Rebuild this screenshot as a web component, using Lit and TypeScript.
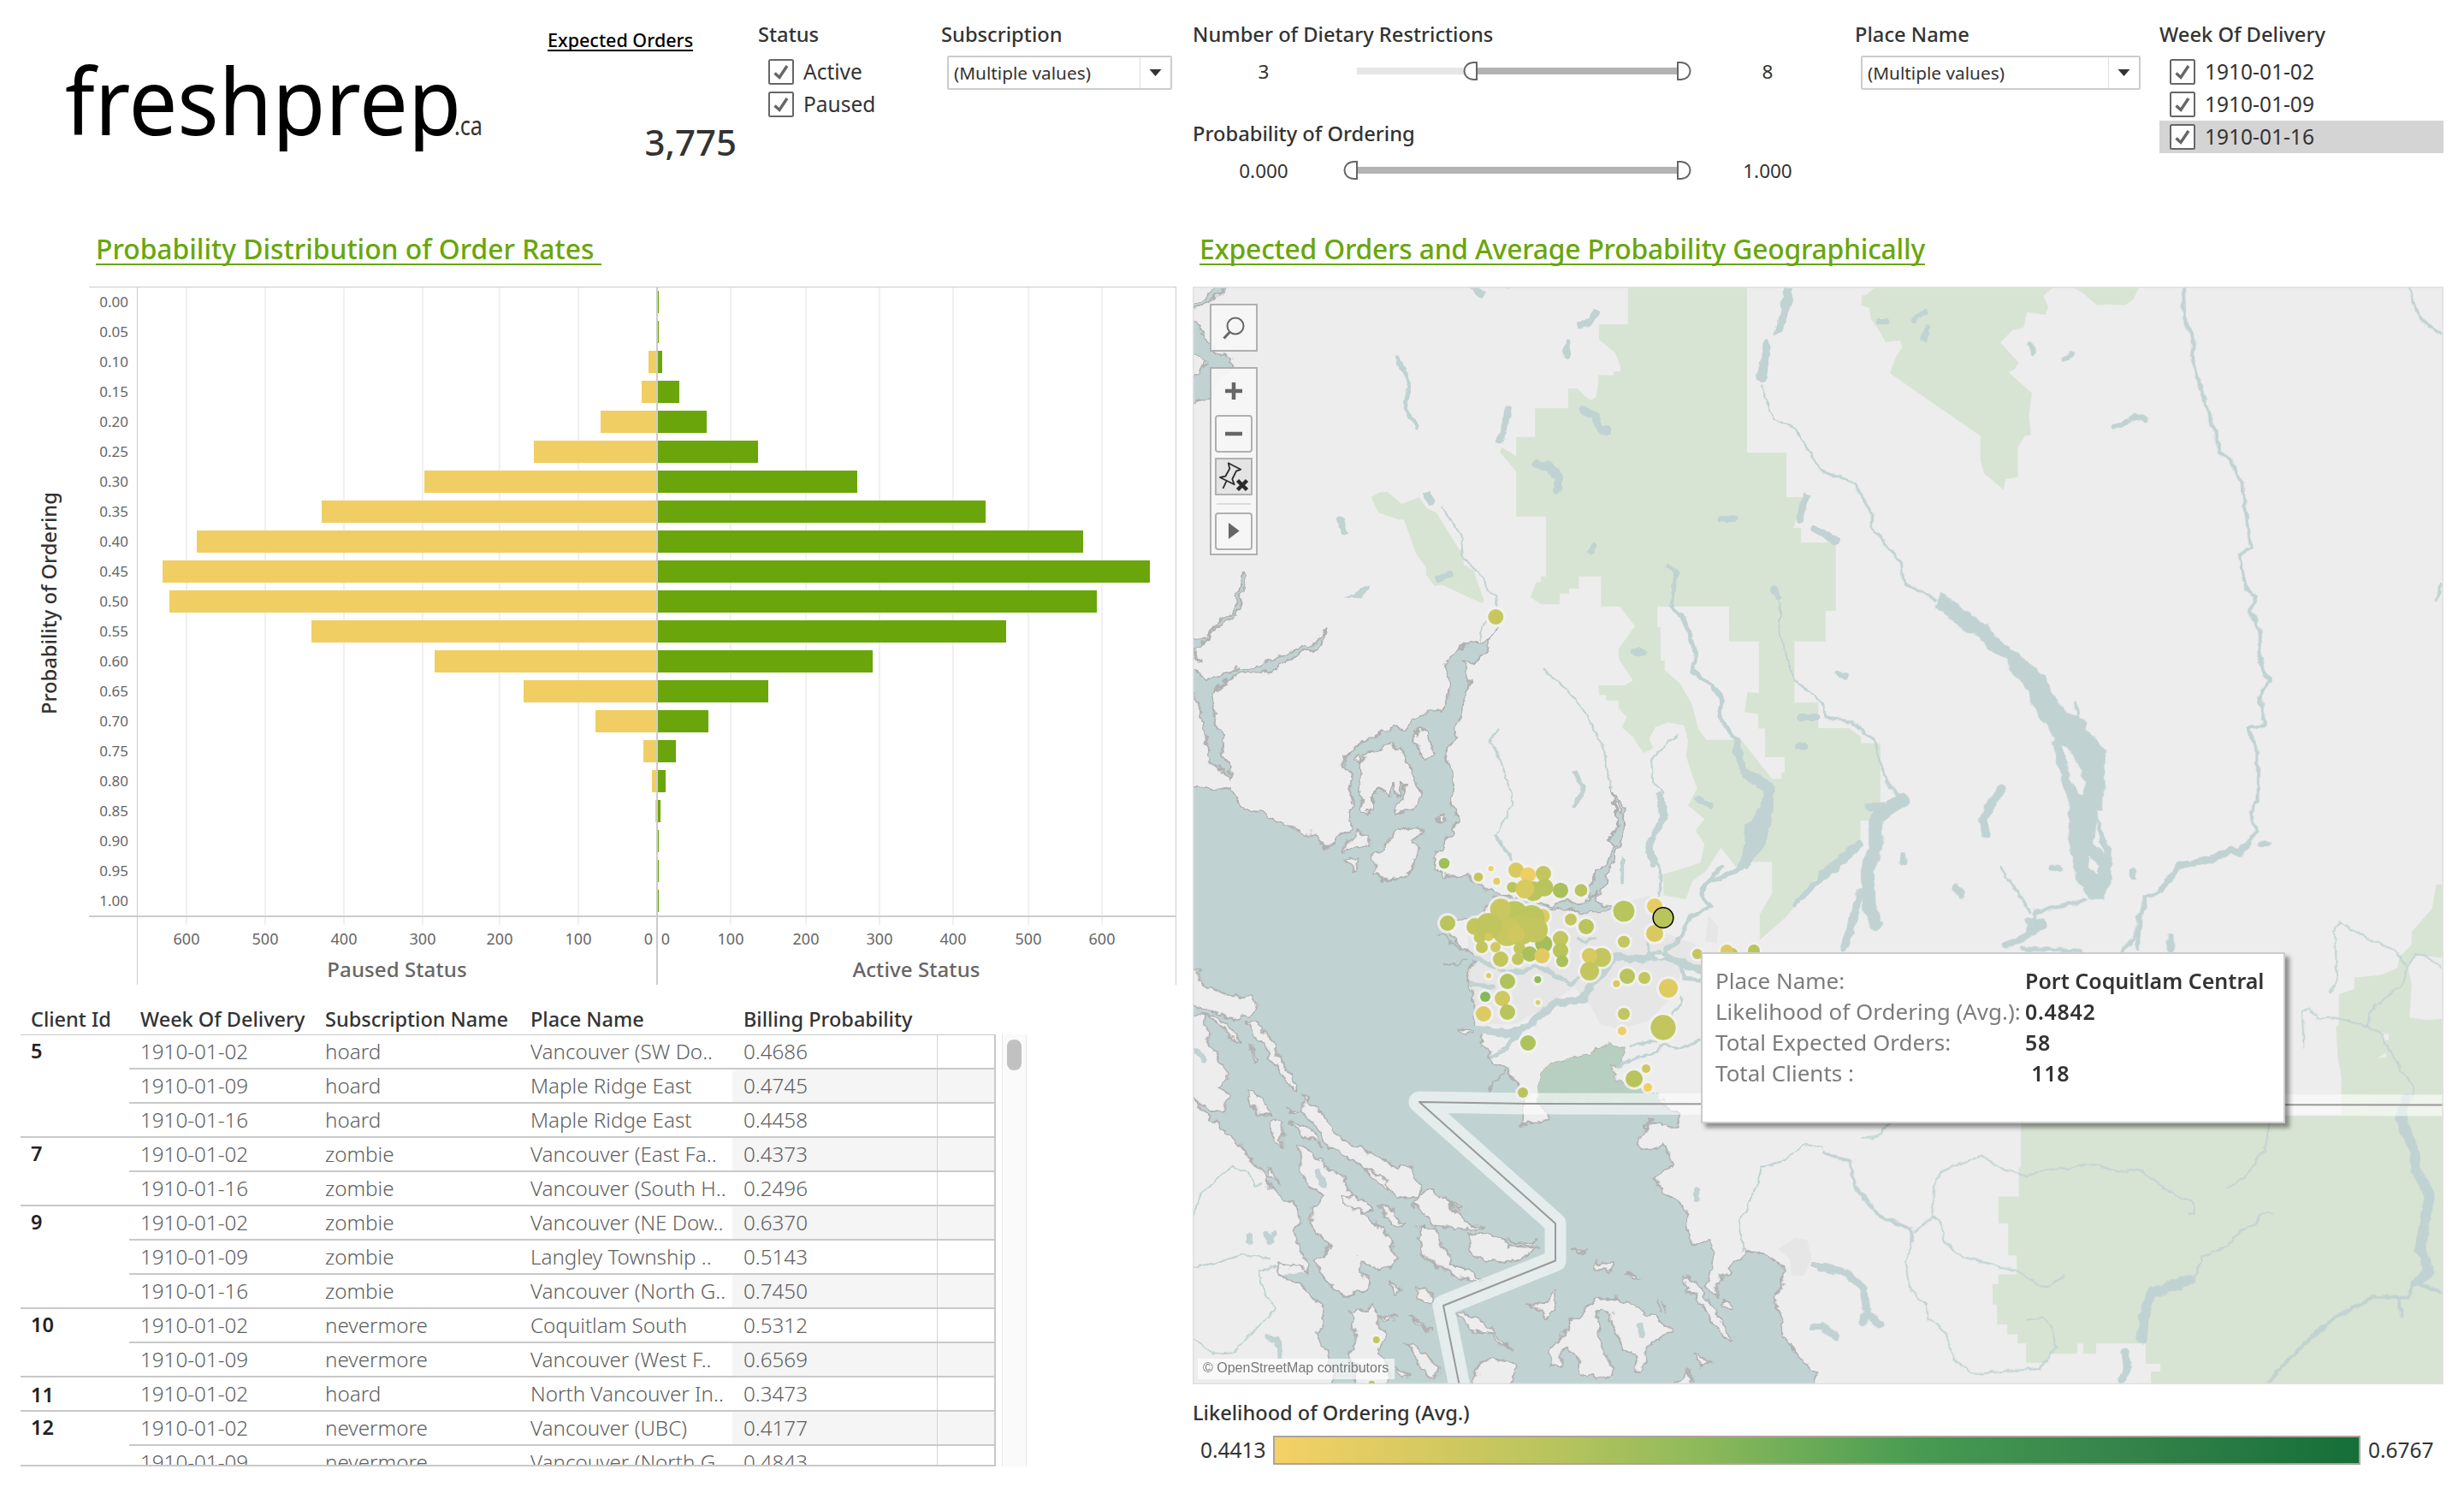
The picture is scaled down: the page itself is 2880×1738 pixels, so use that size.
import { LitElement, html, svg, css } from "lit";
import { customElement } from "lit/decorators.js";

/* ---------- chart data: bin label, paused bar start, active bar end ---------- */
const CENTER = 768;
const BINS: [string, number, number][] = [
  ["0.00", 768, 770], ["0.05", 768, 770], ["0.10", 758, 774], ["0.15", 750, 794],
  ["0.20", 702, 826], ["0.25", 624, 886], ["0.30", 496, 1002], ["0.35", 376, 1152],
  ["0.40", 230, 1266], ["0.45", 190, 1344], ["0.50", 198, 1282], ["0.55", 364, 1176],
  ["0.60", 508, 1020], ["0.65", 612, 898], ["0.70", 696, 828], ["0.75", 752, 790],
  ["0.80", 762, 778], ["0.85", 766, 772], ["0.90", 768, 770], ["0.95", 768, 770],
  ["1.00", 768, 770],
];
const PAUSED_TICKS: [number, string][] = [[218, "600"], [310, "500"], [402, "400"], [494, "300"], [584, "200"], [676, "100"]];
const ACTIVE_TICKS: [number, string][] = [[854, "100"], [942, "200"], [1028, "300"], [1114, "400"], [1202, "500"], [1288, "600"]];

/* ---------- table data ---------- */
type Row = [string, string, string, string];
const CLIENTS: { id: string; rows: Row[] }[] = [
  { id: "5", rows: [
    ["1910-01-02", "hoard", "Vancouver (SW Do..", "0.4686"],
    ["1910-01-09", "hoard", "Maple Ridge East", "0.4745"],
    ["1910-01-16", "hoard", "Maple Ridge East", "0.4458"]] },
  { id: "7", rows: [
    ["1910-01-02", "zombie", "Vancouver (East Fa..", "0.4373"],
    ["1910-01-16", "zombie", "Vancouver (South H..", "0.2496"]] },
  { id: "9", rows: [
    ["1910-01-02", "zombie", "Vancouver (NE Dow..", "0.6370"],
    ["1910-01-09", "zombie", "Langley Township ..", "0.5143"],
    ["1910-01-16", "zombie", "Vancouver (North G..", "0.7450"]] },
  { id: "10", rows: [
    ["1910-01-02", "nevermore", "Coquitlam South", "0.5312"],
    ["1910-01-09", "nevermore", "Vancouver (West F..", "0.6569"]] },
  { id: "11", rows: [["1910-01-02", "hoard", "North Vancouver In..", "0.3473"]] },
  { id: "12", rows: [
    ["1910-01-02", "nevermore", "Vancouver (UBC)", "0.4177"],
    ["1910-01-09", "nevermore", "Vancouver (North G..", "0.4843"]] },
];

/* ---------- map marks: x, y, radius (thirds of a pixel from 1660,990), colour ---------- */
const A = "#b9c45c", B = "#c3c65e", Y = "#dccb61", O = "#efce64", G = "#a9c05b";
const MARKS: [number, number, number, string][] = [
  [84, 57, 19, "#9cc05c"], [248, 76, 9, O], [204, 105, 16, B], [268, 120, 12, "#e6cc62"],
  [336, 81, 27, "#d8ca60"], [378, 98, 27, O], [432, 93, 27, B], [323, 141, 19, A],
  [397, 155, 34, A], [436, 142, 31, A], [367, 147, 33, "#d6ca60"], [492, 152, 27, G],
  [564, 152, 22, A], [96, 267, 27, A], [428, 243, 26, Y], [433, 340, 30, "#a3be5a"],
  [209, 317, 21, B], [348, 356, 21, B], [384, 375, 27, G], [427, 381, 27, "#dfcb61"],
  [192, 279, 30, B], [330, 240, 50, "#bdc55d"], [390, 250, 46, "#bdc55d"], [350, 290, 54, B],
  [402, 290, 45, B], [305, 297, 50, "#c9c75f"], [335, 305, 30, "#d0c85f"], [282, 218, 37, "#c9c760"],
  [240, 278, 46, "#c0c55e"], [240, 315, 15, "#d3c95f"], [216, 351, 21, B],
  [264, 351, 18, "#d3c95f"], [282, 393, 27, B], [342, 393, 21, B], [492, 321, 27, B],
  [492, 363, 27, A], [498, 400, 21, G], [528, 254, 21, B], [582, 279, 27, A],
  [714, 225, 37, A], [714, 332, 21, B], [822, 207, 27, "#e6cc62"], [822, 303, 30, "#d9c95f"],
  [636, 387, 33, B], [594, 381, 27, "#d6ca60"], [594, 435, 33, B], [726, 453, 27, A],
  [786, 459, 21, B], [688, 479, 12, "#d8ca60"], [870, 495, 33, "#e0cb62"], [240, 451, 9, Y],
  [306, 471, 27, "#b0c25b"], [412, 465, 12, "#8cbb5a"], [228, 525, 18, "#84b85a"],
  [288, 531, 27, "#cfc85f"], [306, 579, 27, A], [413, 545, 8, Y], [222, 585, 27, Y],
  [714, 585, 21, B], [708, 645, 15, O], [852, 633, 44, B], [378, 687, 27, "#aec25b"],
  [792, 777, 15, "#d0c85f"], [750, 813, 30, A], [798, 843, 15, O], [360, 861, 18, A],
  [972, 375, 18, B], [1095, 372, 18, B], [1075, 364, 22, Y], [1170, 363, 21, A],
  [265, -807, 27, "#c8c75e"], [-154, 1728, 12, B], [-170, 1884, 12, G],
];

/* Map sheets: local tracing units to page pixels. */
const NW = "translate(1380 330) scale(.47832 .44643)";
const NE = "translate(2130 330) scale(.47832 .44643)";
const SW = "translate(1380 960) scale(.47832 .49618)";
const SE = "translate(2130 960) scale(.47832 .49618)";
const MID = "translate(1660 990) scale(.33333)";

const sea = (shore: string, close = "") => svg`
  <path class="w" d=${shore + close}></path><path class="c" d=${shore}></path>`;
const lands = (...ds: string[]) => ds.map((d) => svg`<path class="i" d=${d}></path>`);
const rivers = (width: number, ...ds: string[]) =>
  ds.map((d) => svg`<path class="r" stroke-width=${width} d=${d}></path>`);

@customElement("map-view")
export class MapView extends LitElement {
  static styles = css`
    :host { display: block; position: relative; width: 1462px; height: 1283px; font-family: "Noto Sans", "Open Sans", sans-serif; }
    .map { display: block; width: 1462px; height: 1283px; }
    .w { fill: #c1d2d2; }
    .c { fill: none; stroke: #b0b0b0; stroke-width: 2; vector-effect: non-scaling-stroke; stroke-linejoin: round; }
    .i { fill: #ededed; stroke: #b0b0b0; stroke-width: 2; vector-effect: non-scaling-stroke; stroke-linejoin: round; }
    .l { fill: #ededed; }
    .p { fill: #d8e4d3; }
    .u { fill: #e6e6e6; }
    .r { fill: none; stroke: #c1d2d2; vector-effect: non-scaling-stroke; stroke-linejoin: round; stroke-linecap: round; }
    .halo { fill: #f1f1ee; fill-opacity: .85; }
    .search, .tools { position: absolute; left: 20px; box-sizing: border-box; width: 56px; border: 2px solid #b0b0b0; background: rgba(246, 246, 246, .93); }
    .search { top: 20px; height: 56px; }
    .search svg { display: block; }
    .tools { top: 94px; height: 220px; display: flex; flex-direction: column; align-items: center; padding-top: 4px; }
    .btn { box-sizing: border-box; width: 44px; height: 44px; border: 2px solid #b0b0b0; border-radius: 4px; margin-bottom: 6px; flex: none; }
    .btn svg { display: block; width: 40px; height: 40px; }
    .bare { border-color: transparent; }
    .on { background: #e4e4e4; border-radius: 0; }
    .sep { width: 40px; height: 2px; background: #dcdcdc; margin: 3px 0 9px; flex: none; }
    .credit { position: absolute; left: 6px; bottom: 6px; height: 24px; padding: 0 7px 0 6px; background: rgba(255, 255, 255, .65); font: 16px/21px "Liberation Sans", Arial, sans-serif; color: #777; white-space: nowrap; }
    .tip { position: absolute; left: 594px; top: 778px; box-sizing: border-box; width: 683px; height: 200px; border: 2px solid #ccc; background: #fff; box-shadow: 5px 5px 5px rgba(0, 0, 0, .4); padding: 13px 0 0 15px; display: grid; grid-template-columns: 362px 1fr; grid-auto-rows: 36px; align-content: start; font-size: 26px; font-weight: 370; line-height: 36px; color: #7c7c7c; white-space: pre; }
    .tip b { font-weight: 600; color: #333; font-size: 25px; }
    .tip .num { letter-spacing: .7px; }
  `;

  render() {
    return html`
      <svg class="map" viewBox="1394 335 1462 1283">
        <defs>
          <filter id="jag" x="1390" y="330" width="1470" height="1290" filterUnits="userSpaceOnUse" color-interpolation-filters="sRGB">
            <feTurbulence type="fractalNoise" baseFrequency=".07" numOctaves="3" seed="4" result="n"></feTurbulence>
            <feDisplacementMap in="SourceGraphic" in2="n" scale="14" xChannelSelector="R" yChannelSelector="G"></feDisplacementMap>
          </filter>
          <filter id="soft" x="1390" y="330" width="1470" height="1290" filterUnits="userSpaceOnUse" color-interpolation-filters="sRGB">
            <feTurbulence type="fractalNoise" baseFrequency=".09" numOctaves="2" seed="9" result="n"></feTurbulence>
            <feDisplacementMap in="SourceGraphic" in2="n" scale="7" xChannelSelector="R" yChannelSelector="G"></feDisplacementMap>
          </filter>
        </defs>
        <rect x="1394" y="335" width="1462" height="1283" fill="#ededed"></rect>

        <g transform=${NW}>
          <path class="p" d="M1093,12V110H1022V150L1040,165 1062,185 1075,220V233H1058V243H1020V270L1015,300 1002,308 985,295 970,278H947V330H866V405H820V455L785,432 780,445 820,495V613H893V770H880V785H868L855,825 880,843H926V815H949V802H973V770H1027V849H1073L1110,900 1070,960V985L1105,1042 1085,1055H1022V1080H1040V1095H1070V1115L1090,1138 1078,1165 1105,1190 1130,1232 1155,1220 1145,1195 1160,1165 1190,1152 1230,1160 1240,1200 1235,1240 1250,1290 1262,1325 1240,1370 1280,1405 1258,1435 1280,1470 1270,1520 1180,1550V1605L1235,1615 1250,1568 1285,1540 1320,1480 1360,1535 1385,1517H1445V1600L1415,1655V1722L1480,1661 1568,1544 1598,1525 1661,1465V1409H1710V1207H1663V1190L1633,1167H1558V1100H1500V940H1576V860H1601V681H1516V643H1497L1525,562H1480V446H1384V12Z"></path>
          <path class="l" d="M1165,849H1340V940H1413V1075L1385,1073 1378,1125 1411,1130V1168H1428V1243H1476V1283H1468V1300H1445L1370,1198H1285L1265,1170 1250,1105 1220,1050 1183,1015V990H1173V903H1165Z"></path>
          <path class="p" d="M466,562 485,550 505,548 540,580 583,562 600,590 625,603 690,715 692,740 715,752 742,835 735,840 640,793 620,795 600,765 600,748 575,710 545,620 535,622 483,603Z"></path>
          <path class="p" d="M792,12H812L800,19Z"></path>
        </g>
        <g transform=${NE}>
          <path class="p" d="M130,12H567L540,35 552,65 545,85 500,78 492,118 465,125 435,158 480,210 470,228 455,235 512,290 505,350 510,400 495,402 478,432V510L448,515 443,543 395,500 386,465V402L165,238 180,195 195,170 190,152 155,157 138,125 118,95 115,68 95,60 97,35 110,30Z"></path>
          <path class="p" d="M610,12H775L760,45 740,60 700,58 670,60 640,30Z"></path>
        </g>
        <g transform=${SE}>
          <path class="p" d="M1520,150L1500,148 1490,205 1440,260 1440,290 1410,320 1405,345 1365,362 1300,368V395L1262,407V478L1255,485 1260,560 1268,600 1268,700H1520Z"></path>
          <path class="l" d="M1520,322L1450,315 1430,340 1440,385 1435,462 1480,468 1520,465Z"></path>
          <path class="l" d="M1367,501H1384V515H1367ZM1357,558L1378,545 1378,555Z"></path>
          <path class="p" d="M485,700V815H480V884H430V947H454V1023H475V1067H430V1090H416V1138H427V1185H452V1208H477V1230H498V1275H552V1254H623V1230H638V1254H669V1230H790V1278H826V1296H803V1330H1520V690H485Z"></path>
        </g>
        <g transform=${MID}>
          <path class="u" d="M165,250L250,170 480,210 640,220 800,170 850,180 860,300 960,340 985,370 985,420 915,440 890,520 800,610 700,640 630,620 600,560 540,490 440,560 330,620 200,620 180,560 170,400Z"></path>
          <path class="u" d="M1010,240L1045,280 1040,340 1000,330Z"></path>
        </g>
        <path class="u" d="M2078,1460l20,-13 14,2 6,22 -10,20 -14,0 -2,-20z"></path>

        <g filter="url(#jag)">
          <g transform=${NW}>
            ${sea("M20,1322L60,1328 100,1330 128,1324 135,1350 150,1380 190,1384 235,1413 270,1425 300,1443 322,1445 350,1476 380,1468 415,1425 412,1395 422,1365 410,1318 418,1295 398,1268 400,1238 430,1215 470,1190 515,1162 550,1172 575,1138 600,1124 640,1122 658,1075 660,1045 648,1010 650,985 700,950 740,940 755,935 775,908 760,930 750,960 730,988 692,994 690,1005 705,1045 690,1090 685,1125 670,1190 648,1235 650,1260 662,1285 665,1360 675,1410 660,1450 640,1485 615,1497 625,1530 640,1545 643,1560", "L643,1570H20Z")}
            ${sea("M20,1000L62,1038 100,1028 150,1010 200,1000 240,978 300,960 325,940 350,920 360,898 345,950 310,968 270,985 215,1025 150,1020 110,1045 78,1085 85,1150 105,1180 105,1210 98,1240 125,1270 115,1303 100,1275 70,1250 68,1220 50,1130 45,1100 20,1060", "Z")}
            ${sea("M20,940L60,935 85,895 130,860 145,800 148,762 157,765 155,800 140,860 105,895 85,905 65,935 38,960 45,995 20,960", "Z")}
            ${sea("M20,58L55,45 75,22 95,5 108,5 100,30 70,50 20,70", "Z")}
            ${sea("M20,95L55,130 70,165 90,185 125,200 128,222 95,245 70,300 20,318", "Z")}
            ${lands("M20,190L50,195 65,212 45,235 20,260",
              "M445,1275 438,1260 460,1228 490,1222 515,1210 540,1222 550,1245 568,1280 575,1310 588,1335 583,1363 555,1380 535,1392 528,1375 540,1350 552,1315 542,1315 535,1345 523,1345 520,1310 508,1345 495,1325 475,1345 455,1392 445,1385 448,1355 438,1340Z",
              "M580,1172 600,1180 612,1205 615,1240 600,1248 582,1230 575,1200Z",
              "M630,1395 640,1392 645,1410 635,1412Z", "M422,1245 440,1238 438,1258Z")}
            ${sea("M1050,1325L1065,1355 1082,1375 1080,1440 1065,1480 1060,1510 1045,1540 1040,1575 1000,1630 1000,1568 1040,1520 1058,1480 1048,1460 1062,1430 1062,1370Z")}
            ${lands("M1062,1365 1070,1365 1074,1392 1066,1388Z")}
          </g>
          <g transform=${SW}>
            ${sea("M643,133L650,128 705,128 730,150 760,162 800,180 860,185 905,205 935,188 960,195 1000,185 1015,160 1012,190 1055,203 1050,212 1010,212 960,207 900,212 850,205 800,188 765,178 750,195 735,220 715,235 690,228 655,232 640,250 665,275 695,300 725,330 705,345 700,370 712,400 715,450 720,480 735,510 735,530 760,545 760,565 800,590 825,615 822,635 835,650 835,712 900,705 885,665 870,625 885,590 905,570 960,560 1010,540 1050,525 1082,535 1080,570 1050,575 1065,615 1110,632 1150,640 1190,670 1215,690 1218,725 1190,725 1165,705 1150,705 1120,745 1125,765 1150,775 1180,760 1200,780 1198,815 1155,838 1190,880 1230,905 1240,960 1242,1000 1290,985 1305,1010 1300,1050 1280,1095 1305,1115 1325,1070 1360,1040 1375,1010 1440,1025 1480,1060 1470,1090 1450,1120 1470,1175 1465,1200 1500,1250 1550,1300 1540,1340",
              "L375,1340 365,1270 332,1210 350,1190 350,1150 320,1110 270,1080 235,1065 310,1065 290,1000 275,965 298,945 290,910 245,890 200,830 150,770 100,720 60,690 20,640V135H643Z")}
            <path class="c" d="M375,1340L365,1270 332,1210 350,1190 350,1150 320,1110 270,1080 235,1065 240,1045 280,1050 310,1065 305,1035 290,1000 275,965 298,945 290,910 245,890 200,830 150,770 100,720 60,690 20,640"></path>
            ${lands(
              "M20,355L45,350 45,375 75,395 110,410 180,415 185,435 170,460 130,465 90,450 20,430",
              "M20,455L60,460 65,510 90,560 120,605 90,625 110,650 105,685 70,680 20,645",
              "M50,455 95,460 130,500 150,520 120,510 90,470Z",
              "M165,475 190,475 225,520 245,560 285,620 285,645 250,600 225,570 215,540 185,520Z",
              "M300,648 330,670 350,700 380,740 440,770 490,795 560,820 590,855 585,885 530,885 500,850 440,810 370,770 330,720 300,690Z",
              "M165,640 200,645 210,670 220,690 195,695 170,665Z", "M225,700 245,705 250,770 225,740 215,715Z",
              "M288,760 330,785 360,820 390,825 410,870 440,920 490,955 530,1025 520,1050 480,1055 435,1030 440,1055 465,1085 450,1105 400,1120 360,1085 325,1040 370,1000 340,975 315,950 315,910 355,885 315,860 295,830 290,790Z",
              "M580,910 560,900 610,870 640,885 665,915 690,940 740,955 700,960 640,960 600,935Z",
              "M580,955 620,955 635,1000 660,1020 655,1050 690,1050 735,1080 710,1085 640,1055 590,1020Z",
              "M705,970 750,970 800,1000 880,1005 830,1030 800,1040 740,1035 710,1010Z",
              "M575,1100 595,1095 615,1120 605,1135 580,1125Z",
              "M410,1155 470,1145 485,1185 500,1200 485,1250 505,1290 500,1340 415,1340 440,1290 410,1260 430,1215 420,1180Z",
              "M900,1250 930,1210 960,1175 1010,1125 1060,1120 1110,1140 1200,1200 1170,1220 1135,1240 1125,1300 1110,1295 1115,1260 1080,1240 1055,1190 1050,1155 1030,1150 1015,1160 1025,1215 1040,1260 1060,1290 1055,1310 980,1305 975,1270 950,1240 925,1260 930,1290 905,1280Z",
              "M850,1140 890,1130 915,1105 920,1150 895,1175 880,1150Z",
              "M1230,1070 1265,1095 1290,1130 1320,1170 1350,1225 1330,1220 1290,1170 1265,1120 1235,1110Z",
              "M675,1160 720,1165 760,1190 770,1210 710,1200Z", "M550,1230 580,1240 635,1290 620,1315 590,1290Z",
              "M715,1340 720,1290 760,1265 815,1275 820,1300 790,1340Z", "M1255,1255 1280,1260 1295,1275 1270,1285Z",
              "M1195,1340 1235,1290 1260,1340Z", "M960,1005 990,1010 975,1015Z", "M1015,1032 1035,1042 1055,1045 1050,1065 1018,1052Z",
              "M1090,1065 1125,1072 1100,1074Z", "M385,880 430,885 470,915 450,920 400,900Z",
              "M490,905 520,915 545,950 520,955 495,930Z", "M510,1085 540,1100 525,1115Z",
              "M595,15 585,25 570,50 580,70 575,95 560,120 540,135 500,138 465,130 475,105 470,85 490,65 515,35 530,22 560,15Z",
              "M395,75 405,50 425,30 430,22 460,38 460,55 435,60Z", "M400,90 435,85 430,115Z",
              "M265,705 310,725 350,770 300,740Z", "M260,670 290,690 280,692Z", "M165,530 185,555 180,565Z",
              "M210,810 240,850 215,840Z", "M440,810 500,840 510,870 470,840Z", "M640,890 690,915 680,918Z",
              "M790,985 870,992 860,1000Z", "M750,1200 810,1245 770,1225Z", "M680,490 715,485 700,505Z",
              "M560,1160 610,1200 580,1185Z", "M480,1165 530,1168 500,1175Z", "M1320,1125 1345,1130 1348,1148 1325,1142Z",
              "M525,1280 560,1305 540,1312Z")}
            <path class="c" d="M628,262L690,302M642,344L705,325M790,590L750,635M1168,1130L1170,1155M1180,1130L1186,1158"></path>
            <path d="M872,660L870,625 885,590 905,570 960,560 1010,540 1050,525 1082,535 1080,570 1050,575 1065,615 1110,632 1150,640 1185,662Z" fill="#b7cfc1"></path>
          </g>
        </g>

        <g filter="url(#soft)">
          <g transform=${NW}>
            ${rivers(2, "M1448,360L1500,380 1545,460 1568,495M1420,270L1448,360", "M1462,830L1465,930 1500,1040 1568,1100", "M885,1015L930,1050 985,1120 1030,1210 1052,1325", "M775,1172L755,1195 780,1245 812,1360 770,1450", "M1212,1185L1150,1250 1155,1310 1182,1340", "M640,590L665,630 685,665 690,720 745,780 750,810 772,820 772,845", "M742,885L732,915 735,940")}
            ${rivers(5, "M1192,740L1210,760 1200,850 1230,880 1258,970 1250,1020 1300,1055 1325,1090 1315,1135 1355,1195", "M528,195L560,260 548,330 578,378", "M770,1450L810,1510", "M962,1282L985,1320 960,1375", "M1078,1510V1568")}
            ${rivers(8, "M1172,1345L1180,1400 1145,1470 1155,1525", "M800,330L795,370 780,415", "M1452,805L1462,825", "M1528,562L1512,620", "M1548,645L1600,675", "M388,618L402,655", "M948,158L942,190", "M1320,619H1352", "M1108,968H1132", "M1268,1355L1295,1370", "M1515,1138H1550", "M1508,1215H1525", "M630,775L655,765", "M602,558L612,575", "M975,110L1000,105 1015,80", "M715,10L735,30", "M1008,690L1002,705")}
            ${rivers(11, "M985,335L1012,350 1025,380 1042,388", "M870,475L905,490 925,510 922,540", "M1432,165L1420,250")}
            <path class="w" d="M865,468L900,465 935,500 930,520 905,510 895,495 865,490ZM1475,12H1497L1495,45 1470,130 1450,140 1465,80ZM396,825L425,818 440,800 462,792 460,808 442,827ZM1350,1190L1350,1230 1360,1265 1385,1305 1425,1335 1410,1385 1380,1420 1378,1470 1360,1530 1290,1568 1300,1572 1385,1535 1430,1465 1450,1385 1452,1320 1415,1285 1385,1275 1370,1225 1370,1192Z"></path>
          </g>
          <g transform=${NE}>
            ${rivers(3, "M0,495L60,518 80,525 120,605 120,640 190,730 200,788 275,830", "M0,1100L8,1140 70,1150 130,1200 138,1250 165,1320 195,1350", "M435,1533L480,1600 508,1648", "M1430,12L1460,95 1512,133", "M1512,790L1502,835")}
            ${rivers(4, "M882,12L885,100 908,155 903,190 920,260 960,390 970,445 995,460 1025,525 1035,600 1047,695 1018,715 1035,800 1058,825 1045,860 1072,915 1065,960 1078,1020 1093,1040 1068,1085 1083,1158 1038,1165 1065,1230 1063,1360 1045,1390 1063,1438 1025,1475 1020,1500 1000,1480 950,1505 870,1525 840,1568")}
            ${rivers(7, "M140,102H155", "M225,98L252,78", "M257,118L248,148", "M510,165L515,185", "M590,202L607,188", "M715,378L743,365", "M755,358L768,352 790,360", "M38,1022L55,1033", "M198,1500V1520", "M560,1533H578", "M755,1538L762,1560", "M1072,1470H1088", "M1020,1495L1035,1475")}
            ${rivers(3, "M620,1100L625,1140")}
            ${rivers(10, "M438,1325L405,1380 393,1410 400,1445", "M90,1470L50,1510 0,1555")}
            ${rivers(16, "M195,1355L150,1385 130,1405 130,1480 110,1540 115,1640 130,1680")}
            <path class="w" d="M102,1368L150,1360 140,1385 115,1385Z"></path>
            <path class="w" d="M290,813L345,855 385,885 405,895 425,930 480,975 545,1030 560,1075 605,1130 640,1145 645,1170 692,1225 690,1300 685,1380 672,1385 675,1410 700,1470 710,1510 705,1575 685,1615 650,1615 620,1560 600,1450 605,1360 585,1310 570,1230 558,1205 568,1200 515,1110 500,1065 455,1015 450,985 405,960 385,930 340,905 275,850Z"></path>
            <path class="l" d="M585,1210L600,1215 635,1280 640,1340 625,1338 605,1300ZM670,1410L685,1495 665,1470ZM650,1500L675,1525 675,1552 648,1535Z"></path>
          </g>
          <g transform=${MID}>
            ${rivers(9, "M1100,480L985,430 900,400 840,378 780,392 680,385 650,430 600,480 570,535 480,545 430,580 380,625 320,655 240,645 200,640")}
            ${rivers(5, "M160,380L220,400 280,430 340,440 400,420 450,430 500,470 530,480 560,450 640,430", "M180,480L250,490", "M860,370L915,420 925,460 985,465", "M860,365L920,310 950,240 1020,210 985,170 1000,130 1060,70", "M380,625L320,680 290,710 250,740")}
            ${rivers(3, "M550,320L580,333 615,320", "M800,370L795,335", "M915,530L905,570 885,585", "M840,170L845,80 825,40", "M690,770L750,740 830,720 850,690 900,710 985,680", "M735,695L790,690 830,680")}
            <path class="l" d="M820,383L845,374 858,385 838,390Z"></path>
          </g>
          <g transform=${SW}>
            ${rivers(2, "M25,935L50,880 90,840 125,815 165,825 180,860 195,850", "M25,1050L90,1040 150,1020 215,1028", "M235,1045L190,1060 195,1090 230,1150 180,1200 130,1250 80,1253 25,1215", "M1375,1010L1365,940 1400,880 1420,815 1480,795 1530,762 1568,770")}
            ${rivers(7, "M210,975L220,990M230,972L215,990M335,825L348,855M168,975V990M1262,870V890M1125,1190V1210M215,1215L240,1225V1260M1548,1045H1568M1545,1190H1568M1500,195L1568,130", "M40,540L55,560")}
          </g>
          <g transform=${SE}>
            ${rivers(8, "M1040,50L1020,75 1000,68 950,90 870,105 825,165", "M850,270V300")}
            ${rivers(5, "M825,165L790,180 775,235 760,275 735,305", "M775,235L770,300M455,290L500,270 520,215 600,195 640,185", "M490,300L630,305")}
            ${rivers(9, "M90,170L75,240 50,300", "M505,235L540,240 500,270 450,292", "M325,155L340,172", "M0,1050L60,1065 100,1100 110,1160 140,1185M110,1160L98,1178", "M0,1190L35,1215", "M740,1250L745,1285 730,1320")}
            ${rivers(2, "M1240,400L1258,380 1252,250 1265,238 1330,275 1400,305 1430,345 1420,380 1340,445 1330,480", "M1430,340L1448,315 1480,322 1512,345", "M1178,530L1175,450 1190,440 1210,465 1240,460 1310,475 1360,495 1390,550 1445,630 1440,650", "M1092,700L1080,775 1030,840 992,860", "M270,930L275,855 290,825 390,787 440,820 500,835 560,820 670,810 720,825 770,818 860,880 905,895 912,922 895,922", "M1100,922L1065,928 1055,950 1020,965 990,1000 930,1025 915,1065 900,1078", "M225,970L270,930 290,945 300,990 340,1025 400,1040 475,1060 545,1100 590,1070", "M220,985L202,1040 215,1105 255,1140 258,1170 300,1205 325,1270 370,1300 430,1295 530,1290 570,1240 560,1190 540,1165 500,1175", "M97,745L125,748 165,712")}
            ${rivers(4, "M0,780L65,800 80,860 140,930 215,960 222,990", "M1090,1324L1130,1275 1190,1220 1250,1170 1350,1120 1430,1120 1445,1085 1512,1110", "M1405,1120L1418,1165")}
            ${rivers(12, "M1425,655L1412,700 1445,770 1450,820 1485,880 1470,950 1460,1010 1485,1060 1450,1085", "M900,1080L850,1095 805,1110 790,1150 780,1220")}
          </g>
        </g>

        <g fill="none" stroke-linejoin="round">
          <path d="M2870,1292L1784,1290 1659,1288 1818,1430V1473.500L1687,1526 1707,1625" stroke="#fff" stroke-opacity=".58" stroke-width="25"></path>
          <path d="M2870,1291.500L1784,1290 1659,1288 1818,1430V1473.500L1687,1526 1707,1625" stroke="#999" stroke-width="2"></path>
        </g>

        <g transform=${MID}>
          ${MARKS.map(([x, y, r]) => svg`<circle class="halo" cx=${x} cy=${y} r=${r + 9}></circle>`)}
          ${MARKS.map(([x, y, r, c]) => svg`<circle cx=${x} cy=${y} r=${r} fill=${c}></circle>`)}
          <circle cx="852" cy="248" r="35.500" fill="#b9c45c" stroke="#000" stroke-width="4.500"></circle>
        </g>
        <rect x="1394.500" y="335.500" width="1461" height="1282" fill="none" stroke="#e0e0e0" stroke-width="2"></rect>
      </svg>

      <div class="search">
        <svg width="52" height="52" fill="none" stroke="#666" stroke-width="2"><circle cx="28" cy="24" r="9.500"></circle><path d="M21.500 31L14.500 38.500" stroke-width="3"></path></svg>
      </div>
      <div class="tools">
        <div class="btn bare"><svg viewBox="0 0 40 40"><path d="M10 20H30M20 10V30" stroke="#666" stroke-width="4.500"></path></svg></div>
        <div class="btn"><svg viewBox="0 0 40 40"><path d="M10 20H30" stroke="#666" stroke-width="4.500"></path></svg></div>
        <div class="btn on"><svg viewBox="0 0 40 40" fill="none" stroke="#2a2a2a" stroke-width="1.800" stroke-linejoin="round"><path d="M13.700 4.300L28.300 11.700 23 13.700 18.300 23 20.700 29.300 4 21 10.300 19.700 15.300 10.700ZM11.300 25.700L7.500 34"></path><path d="M24.500 24.500L35.500 35.500M35.500 24.500L24.500 35.500" stroke-width="4.500"></path></svg></div>
        <div class="sep"></div>
        <div class="btn"><svg viewBox="0 0 40 40"><path d="M14 10L26.700 19.500 14 29Z" fill="#666"></path></svg></div>
      </div>
      <div class="credit">© OpenStreetMap contributors</div>
      <div class="tip">
        <span>Place Name:</span><b>Port Coquitlam Central</b>
        <span>Likelihood of Ordering (Avg.):</span><b class="num">0.4842</b>
        <span>Total Expected Orders:</span><b class="num">58</b>
        <span>Total Clients :</span><b class="num"> 118</b>
      </div>
    `;
  }
}

@customElement("app-root")
export class AppRoot extends LitElement {
  static styles = css`
    :host { display: block; width: 2880px; height: 1738px; overflow: hidden; background: #fff; color: #333; font-family: "Noto Sans", "Open Sans", sans-serif; font-size: 24px; line-height: 32px; }
    .head { display: grid; grid-template-columns: 640px 246px 214px 294px 774px 356px 356px; height: 265px; }
    .logo { display: block; width: 620px; height: 200px; }
    .kpi { display: flex; flex-direction: column; width: 221px; padding-top: 34px; }
    .kpi-name { align-self: flex-start; font-size: 21.500px; font-weight: 500; color: #000; line-height: 25px; border-bottom: 2px solid #000; height: 24px; white-space: nowrap; }
    .kpi-value { align-self: flex-end; margin-top: 81px; font-size: 42px; font-weight: 500; line-height: 50px; }
    .lab { font-weight: 540; font-size: 23.700px; padding-top: 24px; height: 41px; box-sizing: content-box; white-space: nowrap; }
    .check { display: flex; align-items: center; height: 38px; padding-left: 12px; font-size: 24.500px; font-weight: 370; line-height: 38px; }
    .check svg { width: 30px; height: 30px; margin-right: 11px; flex: none; }
    .sel { background: #d4d4d4; width: 320px; }
    .drop { box-sizing: border-box; height: 40px; margin-left: 7px; border: 2px solid #ccc; border-radius: 2px; display: flex; align-items: center; font-size: 20.800px; font-weight: 380; padding-left: 6px; white-space: nowrap; }
    .drop span { flex: 1; }
    .drop svg { width: 35px; height: 36px; border-left: 1px solid #ddd; }
    .d1 { width: 263px; }
    .d2 { width: 327px; }
    .range { display: grid; grid-template-columns: 166px 426px 160px; height: 38px; font-size: 22.500px; line-height: 38px; text-align: center; }
    .range svg { display: block; width: 426px; height: 38px; }
    .gap { height: 13px; }
    .cols { display: grid; grid-template-columns: 1394px 1486px; }
    .title { height: 70px; font-size: 31.800px; line-height: 52px; font-weight: 500; color: #69a60c; white-space: pre; }
    .title span { display: inline-block; height: 43px; border-bottom: 2px solid #69a60c; }
    .tl { padding-left: 112px; }
    .tr { padding-left: 8px; }
    .tr span { letter-spacing: -.2px; }
    .chart { display: block; width: 1394px; height: 835px; }
    .ax { font-size: 17px; fill: #666; }
    .ax18 { font-size: 18px; fill: #666; }
    .axt { font-weight: 500; fill: #666; font-size: 24px; letter-spacing: .1px; }
    .axv { font-weight: 500; fill: #333; font-size: 23.700px; }
    .table { display: grid; grid-template-columns: 1140px 36px; margin-left: 24px; height: 545px; grid-template-rows: 39px 505px; }
    .th { grid-column: 1 / 3; display: grid; grid-template-columns: 12px 128px 216px 240px 249px 1fr; font-weight: 540; font-size: 23.500px; line-height: 32px; padding-top: 5px; box-sizing: border-box; white-space: nowrap; }
    .rows { box-sizing: border-box; height: 505px; overflow: hidden; border: solid #c9c9c9; border-width: 1px 2px 2px 0; }
    .group { display: grid; grid-template-columns: 127px 1fr; }
    .id { box-sizing: border-box; padding: 0 0 0 12px; font-weight: 600; color: #222; line-height: 36px; font-size: 23.500px; border-bottom: 2px solid #c9c9c9; }
    .low { padding-top: 2px; }
    .row { box-sizing: border-box; display: grid; grid-template-columns: 13px 216px 240px 236px 240px 1fr; height: 40px; border-bottom: 2px solid #c9c9c9; color: #606060; font-size: 24.200px; font-weight: 360; line-height: 38px; white-space: nowrap; }
    .val { padding-left: 13px; border-right: 1px solid #d4d4d4; }
    .alt { background: #f5f5f5; }
    .bar { box-sizing: border-box; margin-left: 7px; height: 505px; background: #fafafa; border: solid #e8e8e8; border-width: 0 1px; padding: 6px 5px; }
    .thumb { height: 36px; border-radius: 8px; background: #c1c1c1; }
    .legend { padding-top: 16px; }
    .lt { font-weight: 540; font-size: 23.600px; line-height: 34px; height: 43px; }
    .scale { display: flex; align-items: center; height: 35px; font-size: 24.500px; font-weight: 380; }
    .scale span { width: 85px; padding-left: 9px; box-sizing: content-box; }
    .ramp { box-sizing: border-box; width: 1271px; height: 34px; border: 2px solid #aca39a; background: linear-gradient(90deg, #f4d166 0%, #d3c95f 15%, #b7c45d 26%, #8fba5a 39%, #60a756 52%, #469a51 60%, #35844b 78%, #166e38 100%); }
  `;

  private check(label: string, cls = "") {
    return html`<div class="check ${cls}">
      <svg viewBox="0 0 30 30"><rect x="1" y="1" width="28" height="28" rx="1.500" fill="#fff" stroke="#666" stroke-width="2"></rect><path d="M7.500 16.500L13 21.500 22 8" fill="none" stroke="#666" stroke-width="3.400"></path></svg>${label}</div>`;
  }

  private drop(cls: string) {
    return html`<div class="drop ${cls}"><span>(Multiple values)</span>
      <svg viewBox="0 0 35 36"><path d="M10.500 14H24.500L17.500 22Z" fill="#333"></path></svg></div>`;
  }

  private range(lo: string, hi: string, from: number) {
    return html`<div class="range"><span>${lo}</span>
      <svg viewBox="1560 0 426 38"><rect x="1586" y="14" width="384" height="8" fill="#e6e6e6"></rect>
        <rect x=${from} y="14" width=${1961 - from} height="8" fill="#b3b3b3"></rect>
        <g fill="#fff" stroke="#666" stroke-width="2"><path d=${`M${from - 1} 8H${from - 5}C${from - 19} 9 ${from - 19} 27 ${from - 5} 28H${from - 1}Z`}></path>
        <path d="M1961 8H1965C1979 9 1979 27 1965 28H1961Z"></path></g></svg>
      <span>${hi}</span></div>`;
  }

  private chart() {
    return html`<svg class="chart" viewBox="0 335 1394 835">
      ${[...PAUSED_TICKS, ...ACTIVE_TICKS].map(([x, t]) => svg`
        <rect x=${x - 1} y="336" width="2" height="745" fill="#f0f0f0"></rect>
        <text class="ax18" x=${x} y="1104" text-anchor="middle">${t}</text>`)}
      ${BINS.map(([t, l, r], i) => {
        const y = Math.round(339.5 + i * 35.03);
        return svg`
          <text class="ax" x="150" y=${y + 19} text-anchor="end">${t}</text>
          <rect x=${l} y=${y} width=${CENTER - l} height="26" fill="#f0ce63"></rect>
          <rect x=${CENTER} y=${y} width=${r - CENTER} height="26" fill="#6aa60b"></rect>`;
      })}
      <g fill="#ccc">
        <rect x="104" y="335" width="1271" height="1"></rect>
        <rect x="160" y="336" width="1" height="815"></rect>
        <rect x="767" y="336" width="2" height="815"></rect>
        <rect x="1374" y="336" width="1" height="815"></rect>
        <rect x="104" y="1070" width="1271" height="2"></rect>
      </g>
      <text class="ax18" x="758" y="1104" text-anchor="middle">0</text>
      <text class="ax18" x="778" y="1104" text-anchor="middle">0</text>
      <text class="axt" x="464" y="1142" text-anchor="middle">Paused Status</text>
      <text class="axt" x="1071" y="1142" text-anchor="middle">Active Status</text>
      <text class="axv" transform="translate(66 705) rotate(-90)" text-anchor="middle">Probability of Ordering</text>
    </svg>`;
  }

  private table() {
    let n = 0;
    return html`<div class="table">
      <div class="th"><span></span><span>Client Id</span><span>Week Of Delivery</span><span>Subscription Name</span><span>Place Name</span><span>Billing Probability</span></div>
      <div class="rows">
        ${CLIENTS.map((c) => html`<div class="group">
          <div class="id ${c.id === "11" ? "low" : ""}">${c.id}</div>
          <div>${c.rows.map((r) => {
            const alt = n++ % 2 ? "alt" : "";
            return html`<div class="row"><span></span><span>${r[0]}</span><span>${r[1]}</span><span>${r[2]}</span><span class="val ${alt}">${r[3]}</span><span class=${alt}></span></div>`;
          })}</div></div>`)}
      </div>
      <div class="bar"><div class="thumb"></div></div>
    </div>`;
  }

  render() {
    return html`
      <div class="head">
        <svg class="logo" viewBox="0 0 620 200">
          <defs><clipPath id="foot"><rect width="620" height="177"></rect></clipPath></defs>
          <text x="76" y="158" font-family="Noto Sans, Open Sans, sans-serif" font-size="108" font-weight="400" fill="#000" clip-path="url(#foot)"><tspan textLength="463" lengthAdjust="spacingAndGlyphs">freshprep</tspan><tspan x="531" font-size="30" fill="#333" textLength="33" lengthAdjust="spacingAndGlyphs">.ca</tspan></text>
        </svg>
        <div class="kpi"><div class="kpi-name">Expected Orders</div><div class="kpi-value">3,775</div></div>
        <div><div class="lab">Status</div>${this.check("Active")}${this.check("Paused")}</div>
        <div><div class="lab">Subscription</div>${this.drop("d1")}</div>
        <div>
          <div class="lab">Number of Dietary Restrictions</div>${this.range("3", "8", 1727)}
          <div class="gap"></div>
          <div class="lab">Probability of Ordering</div>${this.range("0.000", "1.000", 1587)}
        </div>
        <div><div class="lab">Place Name</div>${this.drop("d2")}</div>
        <div><div class="lab">Week Of Delivery</div>${this.check("1910-01-02")}${this.check("1910-01-09")}${this.check("1910-01-16", "sel")}</div>
      </div>
      <div class="cols">
        <div>
          <div class="title tl"><span>Probability Distribution of Order Rates </span></div>
          ${this.chart()}${this.table()}
        </div>
        <div>
          <div class="title tr"><span>Expected Orders and Average Probability Geographically</span></div>
          <map-view></map-view>
          <div class="legend">
            <div class="lt">Likelihood of Ordering (Avg.)</div>
            <div class="scale"><span>0.4413</span><div class="ramp"></div><span>0.6767</span></div>
          </div>
        </div>
      </div>
    `;
  }
}
